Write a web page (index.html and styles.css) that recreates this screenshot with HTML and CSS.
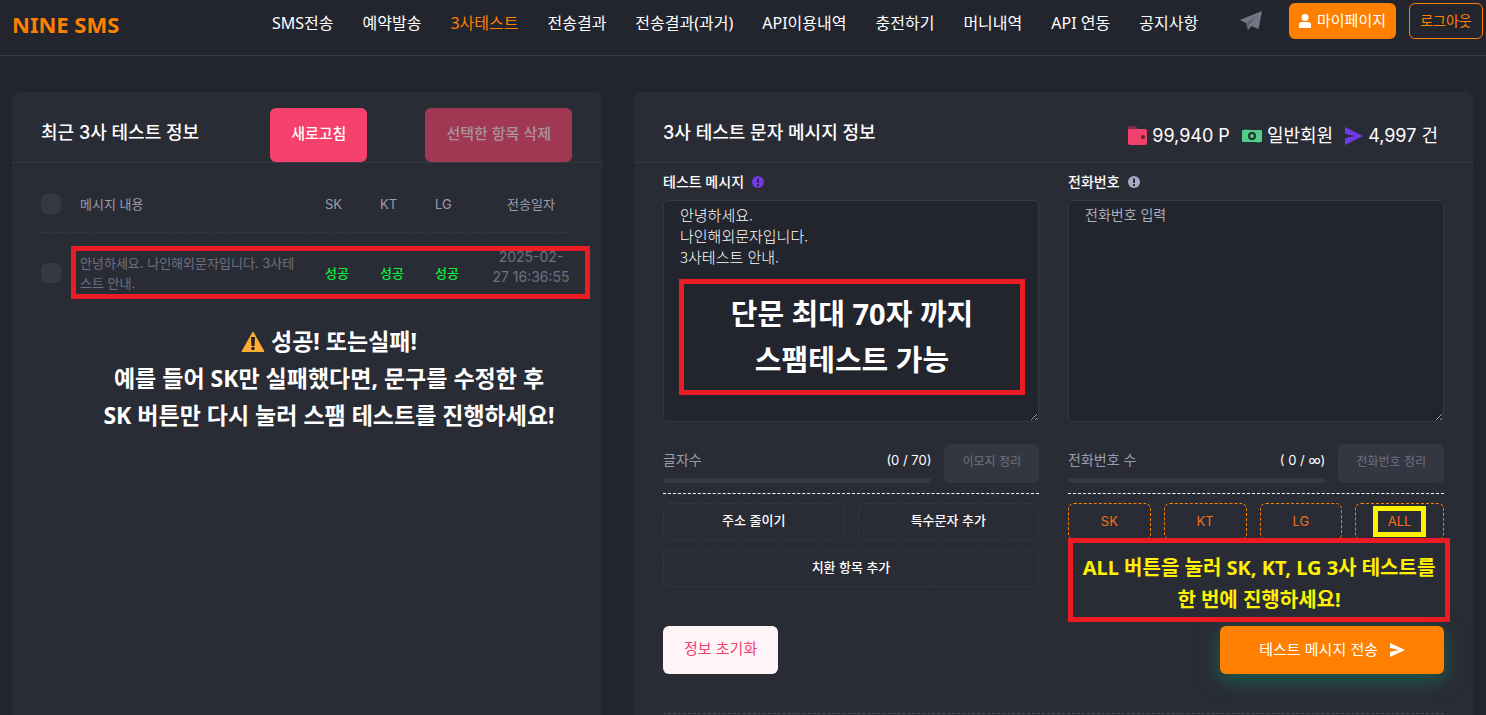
FILE: index.html
```html
<!DOCTYPE html>
<html lang="ko">
<head>
	<meta charset="UTF-8">
	<meta name="viewport" content="width=device-width, initial-scale=1">
	<title>NINE SMS - 3사테스트</title>
	<link rel="stylesheet" href="styles.css">
</head>
<body>
	<header class="top">
		<a class="logo" href="#">NINE SMS</a>
		<nav class="menu">
			<a href="#">SMS전송</a>
			<a href="#">예약발송</a>
			<a href="#" class="on">3사테스트</a>
			<a href="#">전송결과</a>
			<a href="#">전송결과(과거)</a>
			<a href="#">API이용내역</a>
			<a href="#">충전하기</a>
			<a href="#">머니내역</a>
			<a href="#">API 연동</a>
			<a href="#">공지사항</a>
		</nav>
		<div class="user">
			<a class="plane" href="#" aria-label="텔레그램">
				<svg width="22" height="20" viewBox="0 0 22 20"><path d="M0 9 22 0 18.500 18 11.500 15 8 19 6 12z" fill="#737885"/><path d="M6 12 18 4 9 14 8 19z" fill="#5d626f"/></svg>
			</a>
			<button class="mypage" type="button">
				<svg width="12" height="14" viewBox="0 0 12 14"><circle cx="6" cy="3.500" r="3.500" fill="#fff"/><path d="M0 14v-3q0-3 3-3h6q3 0 3 3v3z" fill="#fff"/></svg>
				마이페이지
			</button>
			<button class="logout" type="button">로그아웃</button>
		</div>
	</header>

	<main class="content">
		<!-- 최근 테스트 목록 -->
		<section class="panel">
			<div class="panel-head">
				<h2>최근 3사 테스트 정보</h2>
				<div class="head-btns">
					<button class="pink" type="button">새로고침</button>
					<button class="pink" type="button" disabled>선택한 항목 삭제</button>
				</div>
			</div>
			<div class="list">
				<table>
					<colgroup>
						<col class="c-check"><col><col class="c-sk"><col class="c-sk"><col class="c-sk"><col class="c-date">
					</colgroup>
					<thead>
						<tr>
							<th><input type="checkbox" aria-label="전체 선택"></th>
							<th>메시지 내용</th>
							<th>SK</th>
							<th>KT</th>
							<th>LG</th>
							<th class="date-th">전송일자</th>
						</tr>
					</thead>
					<tbody>
						<tr>
							<td><input type="checkbox" aria-label="항목 선택"></td>
							<td class="msg">안녕하세요. 나인해외문자입니다. 3사테스트 안내.</td>
							<td class="ok">성공</td>
							<td class="ok">성공</td>
							<td class="ok">성공</td>
							<td class="date">2025-02-<br>27 16:36:55</td>
						</tr>
					</tbody>
				</table>
				<div class="mark mark-row"></div>
			</div>
			<div class="guide">
				<p><svg width="24" height="22" viewBox="0 0 24 22"><path d="M12 1 23 20.500H1z" fill="#ffac33" stroke="#ffac33" stroke-linejoin="round"/><path d="M10 6h4l-.5 9h-3z" fill="#231f20"/><circle cx="12" cy="17.500" r="1.800" fill="#231f20"/></svg> 성공! 또는실패!</p>
				<p>예를 들어 SK만 실패했다면, 문구를 수정한 후</p>
				<p>SK 버튼만 다시 눌러 스팸 테스트를 진행하세요!</p>
			</div>
		</section>

		<!-- 테스트 메시지 작성 -->
		<section class="panel">
			<div class="panel-head">
				<h2>3사 테스트 문자 메시지 정보</h2>
				<div class="stats">
					<span><svg width="19" height="20" viewBox="0 0 19 20"><path d="M0 2q0-2 2-2h5q2 0 2 2v2H0z" fill="#7b3046"/><path d="M0 3h17q2 0 2 2v12q0 2-2 2H2q-2 0-2-2z" fill="#f1416c"/><circle cx="15" cy="11" r="2" fill="#5c2638"/></svg>99,940 P</span>
					<span><svg width="20" height="16" viewBox="0 0 20 16"><path d="M2 1 18 3v12L4 13z" fill="#357a5a"/><rect y="2" width="20" height="12" rx="1" fill="#50cd89"/><circle cx="10" cy="8" r="3" fill="none" stroke="#2a2c35" stroke-width="2"/></svg>일반회원</span>
					<span><svg width="18" height="18" viewBox="0 0 18 18"><path d="M0 0 18 9 0 18V11L10 9 0 7z" fill="#7239ea"/></svg>4,997 건</span>
				</div>
			</div>
			<form class="form">
				<div class="col">
					<label for="msg">테스트 메시지
						<svg width="12" height="12" viewBox="0 0 12 12"><circle cx="6" cy="6" r="6" fill="#7239ea"/><path d="M5 2.500h2V7H5zM5 8h2v2H5z" fill="#2a2c35"/></svg>
					</label>
					<div class="area">
						<textarea id="msg" class="mono">안녕하세요.
나인해외문자입니다.
3사테스트 안내.</textarea>
						<div class="mark mark-text">단문 최대 70자 까지<br>스팸테스트 가능</div>
					</div>
					<div class="count">
						<div class="gauge">
							<p><span>글자수</span><b>(0 / 70)</b></p>
							<div class="bar"></div>
						</div>
						<button type="button">이모지 정리</button>
					</div>
					<div class="tools">
						<button type="button">주소 줄이기</button>
						<button type="button">특수문자 추가</button>
						<button type="button" class="wide">치환 항목 추가</button>
					</div>
				</div>
				<div class="col">
					<label for="tel">전화번호
						<svg width="12" height="12" viewBox="0 0 12 12"><circle cx="6" cy="6" r="6" fill="#a7abc8"/><path d="M5 2.500h2V7H5zM5 8h2v2H5z" fill="#2a2c35"/></svg>
					</label>
					<div class="area">
						<textarea id="tel" placeholder="전화번호 입력"></textarea>
					</div>
					<div class="count">
						<div class="gauge">
							<p><span>전화번호 수</span><b>( 0 / ∞)</b></p>
							<div class="bar"></div>
						</div>
						<button type="button">전화번호 정리</button>
					</div>
					<div class="telecom">
						<button type="button">SK</button>
						<button type="button">KT</button>
						<button type="button">LG</button>
						<button type="button" class="all">ALL<i></i></button>
						<div class="mark mark-all">ALL 버튼을 눌러 SK, KT, LG 3사 테스트를<br>한 번에 진행하세요!</div>
					</div>
				</div>
				<div class="submit">
					<button type="reset" class="reset">정보 초기화</button>
					<button type="button" class="send">테스트 메시지 전송
						<svg width="15" height="14" viewBox="0 0 15 14"><path d="M0 0 15 7 0 14V9L9 7 0 5z" fill="#fff"/></svg>
					</button>
				</div>
				<hr>
			</form>
		</section>
	</main>
</body>
</html>
```

FILE: styles.css
```css
*{margin: 0; padding: 0; box-sizing: border-box;}
body{background: #22252e; color: #fff; font: 14px/20px Inter, "Noto Sans CJK KR", sans-serif; color-scheme: dark;}
a{text-decoration: none; color: #fff;}
button{font: inherit; color: #fff; border: 0; background: none; border-radius: 6px; cursor: pointer; white-space: nowrap;}
svg{flex: none;}

/* 상단 메뉴 */
.top{display: flex; align-items: flex-start; height: 56px; padding: 3px 3px 0 12px; border-bottom: 1px solid #363843;}
.logo{flex: 0 0 260px; color: #ff8000; font: bold 22px/42px "Noto Sans", sans-serif;}
.menu{display: flex; gap: 29px; font: 16px/40px "Noto Sans", "Noto Sans CJK KR", sans-serif; white-space: nowrap;}
.menu .on{color: #ff8000;}
.user{display: flex; align-items: center; gap: 13px; margin-left: auto;}
.user button{height: 36px; line-height: 34px; font-size: 15px;}
.plane{display: flex; margin-right: 14px;}
.mypage{display: flex; align-items: center; gap: 6px; padding: 0 10px; background: #ff8000;}
.user .logout{padding: 0 9px; border: 1px solid #ff8000; color: #ff8000; font-size: 14px; width: 74px;}

/* 패널 */
.content{display: grid; grid-template-columns: 590fr 839fr; gap: 32px; padding: 36px 13px 0 12px;}
.panel{min-height: calc(100vh - 92px); background: #2a2c35; border-radius: 8px 8px 0 0; min-width: 0;}
.panel-head{display: flex; justify-content: space-between; align-items: center; height: 71px; padding: 12px 30px 0 29px; border-bottom: 1px solid #363843;}
.panel-head h2{font-size: 18px; font-weight: 500; line-height: 24px;}
.head-btns{display: flex; gap: 58px; margin-top: 4px;}
.pink{height: 54px; padding: 0 21px 3px; background: #f6416c; font-size: 15px; font-weight: 500;}
.pink:disabled{background: #a03854; color: #a9949c;}
.stats{display: flex; gap: 12px; padding: 5px 5px 0 0; font-size: 18px; line-height: 24px;}
.stats span{display: flex; align-items: center; gap: 5px;}

/* 목록 */
.list{position: relative; padding: 13px 30px 0 29px;}
table{width: 100%; table-layout: fixed; border-collapse: collapse; font-size: 13px;}
.c-check{width: 39px;}
.c-sk{width: 55px;}
.c-date{width: 82px;}
th{height: 56px; text-align: left; font-weight: 400; color: #9a9cae; border-bottom: 1px dashed #363843;}
th.date-th{text-align: center;}
td{height: 82px; color: #6d7182;}
.msg{padding-right: 24px; word-break: break-all;}
td.ok{color: #0bf03c; font-weight: 500;}
.date{padding-bottom: 12px; text-align: center; font-size: 14px; white-space: nowrap;}
input[type=checkbox]{display: block; appearance: none; width: 20px; height: 20px; background: #363843; border-radius: 6px;}
.mark{position: absolute; border: 5px solid #ed1c24; pointer-events: none;}
.mark-row{top: 83px; left: 59px; right: 12px; height: 53px;}
.guide{margin-top: 9px; padding-left: 44px; text-align: center; font: bold 23px/37px "Noto Sans", "Noto Sans CJK KR", sans-serif; white-space: nowrap;}
.guide svg{vertical-align: -3px;}

/* 작성 폼 */
.form{display: grid; grid-template-columns: 1fr 1fr; column-gap: 29px; padding: 8px 29px 0;}
.col{min-width: 0;}
label{display: flex; align-items: center; gap: 8px; height: 22px; font-weight: 500;}
.area{position: relative; margin-top: 7px;}
textarea{display: block; width: 100%; height: 222px; padding: 3px 16px; background: #22252e; border: 1px solid #363843; border-radius: 5px; color: #fff; font: 14px/21px Inter, "Noto Sans CJK KR", sans-serif; resize: vertical; outline: 0;}
.mono{font: 300 15px/21px "Noto Sans CJK KR", sans-serif;}
textarea::placeholder{color: #a9abb5;}
.mark-text{left: 16px; right: 14px; top: 79px; height: 116px; padding-top: 7px; text-align: center; font: bold 29px/46px "Noto Sans", "Noto Sans CJK KR", sans-serif;}
.count{display: flex; gap: 13px; margin-top: 22px; padding-bottom: 10px; border-bottom: 1px dashed #fff;}
.gauge{flex: 1; padding-top: 6px;}
.gauge p{display: flex; justify-content: space-between; color: #9a9cae;}
.gauge b{color: #fff; font-weight: 400; font-size: 13px;}
.bar{height: 5px; margin-top: 8px; border-radius: 3px; background: #363843;}
.count button{height: 39px; padding: 0 18px 3px; background: #343741; color: #6d7182; font-size: 12px;}
.tools{display: grid; grid-template-columns: 1fr 1fr; gap: 10px 13px; padding-top: 9px; font-size: 13px; font-weight: 500;}
.tools button{height: 37px; padding-bottom: 3px; border: 1px dashed #363843;}
.tools .wide{grid-column: span 2;}
.telecom{position: relative; display: grid; grid-template-columns: 83fr 83fr 83fr 89fr; gap: 13px; padding-top: 9px; font-size: 13px;}
.telecom button{height: 37px; padding-bottom: 2px; border: 1px dashed #ff8000; color: #f26c1c;}
.all{position: relative;}
.all i{position: absolute; inset: 2px 17px; border: 5px solid #fff200;}
.mark-all{top: 44px; left: 0; right: -6px; height: 84px; padding-top: 9px; background: #2a2c35; color: #fff200; text-align: center; white-space: nowrap; font: bold 20px/32px "Noto Sans", "Noto Sans CJK KR", sans-serif;}
.submit{grid-column: span 2; display: flex; justify-content: space-between; margin-top: 39px;}
.submit button{height: 48px; font-size: 15px;}
.reset{padding: 0 21px 2px; background: #fff5f8; color: #f1416c;}
.submit .send{display: flex; align-items: center; gap: 12px; padding: 0 39px; background: #ff8000; box-shadow: 0 6px 20px rgba(20, 130, 100, .6);}
hr{grid-column: span 2; margin-top: 39px; border: 0; border-top: 1px dashed #4a4d5a;}
```
